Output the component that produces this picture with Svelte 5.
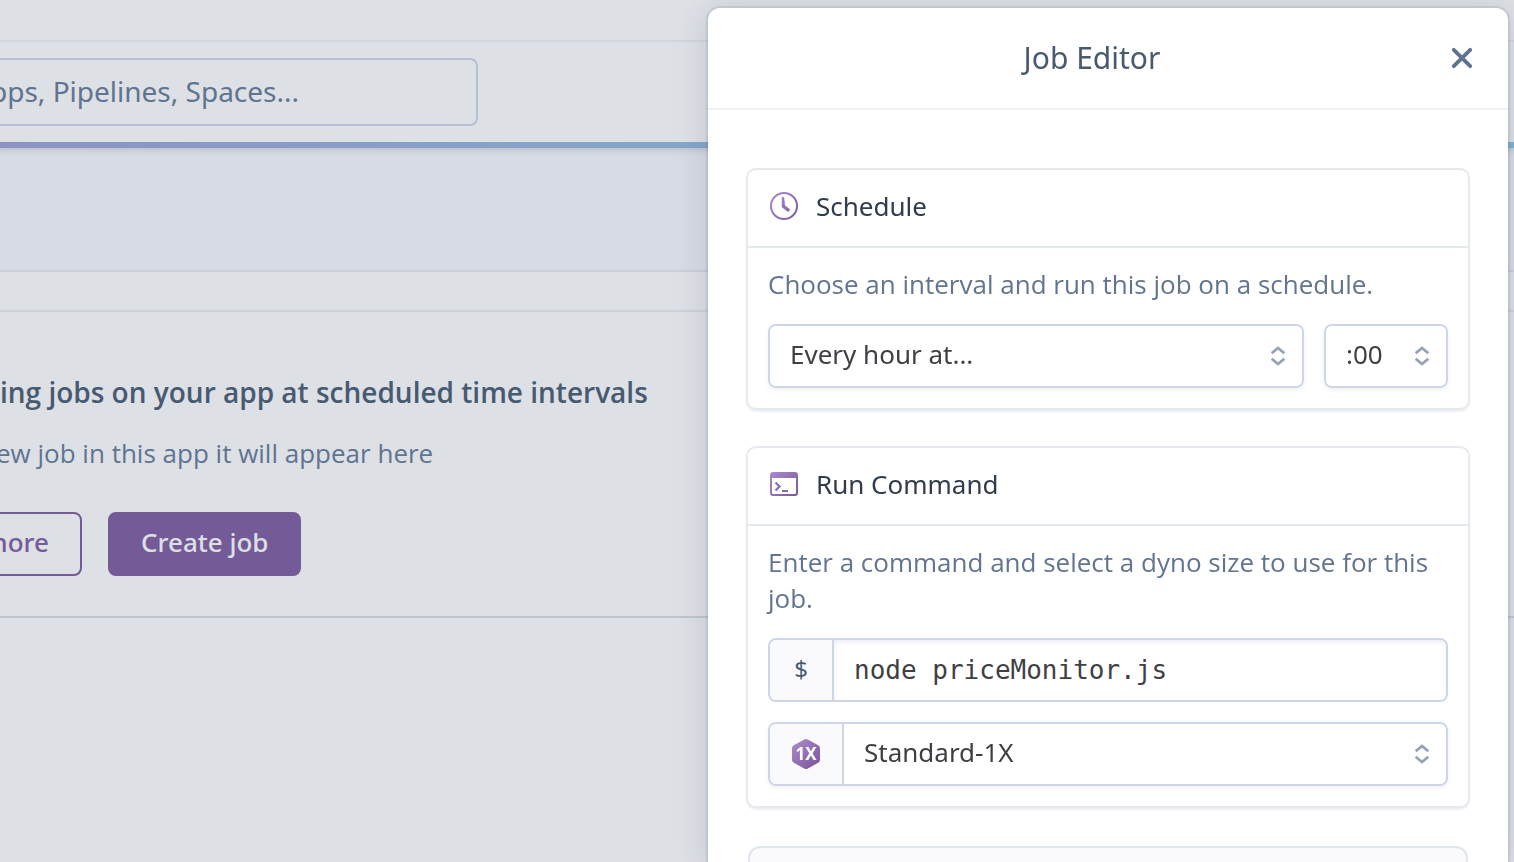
<script>
  let interval = $state('Every hour at...');
  let minute = $state(':00');
  let command = $state('node priceMonitor.js');
  let dyno = $state('Standard-1X');
</script>

{#snippet chevrons()}
  <svg class="chevrons" width="14" height="20" viewBox="0 0 14 20" fill="none" stroke="#96a3b6" stroke-width="2.8" aria-hidden="true">
    <path d="M.7 7.300 7 2l6.300 5.300M.7 12.700 7 18l6.300-5.300" />
  </svg>
{/snippet}

<div class="page">
  <header class="top">
    <div class="strip"></div>
    <div class="searchbar">
      <input class="search" type="text" aria-label="Search" placeholder="pps, Pipelines, Spaces..." />
    </div>
  </header>
  <div class="rule"></div>
  <div class="subhead"></div>
  <main class="jobs">
    <h1>ing jobs on your app at scheduled time intervals</h1>
    <p>ew job in this app it will appear here</p>
    <div class="actions">
      <a class="btn outline" href="#more">more</a>
      <button class="btn solid" type="button">Create job</button>
    </div>
  </main>
</div>

<div class="panel" role="dialog" aria-labelledby="title">
  <header class="panel-head">
    <h2 id="title">Job Editor</h2>
    <button class="close" type="button" aria-label="Close">
      <svg width="22" height="22" viewBox="0 0 22 22" fill="none" stroke="#5f7292" stroke-width="3.8" stroke-linecap="round" aria-hidden="true">
        <path d="M2.800 2.800l16.400 16.400M19.200 2.800l-16.400 16.400" />
      </svg>
    </button>
  </header>
  <div class="panel-body">
    <section class="card">
      <h3>
        <svg width="28" height="28" viewBox="0 0 28 28" fill="none" aria-hidden="true">
          <defs>
            <linearGradient id="purple" x1="0" y1="0" x2="28" y2="28" gradientUnits="userSpaceOnUse">
              <stop offset="0" stop-color="#ad8dcd" />
              <stop offset="1" stop-color="#79559a" />
            </linearGradient>
          </defs>
          <circle cx="14" cy="14" r="13" stroke="url(#purple)" stroke-width="2" />
          <path d="M12.2 5.2h1.6l.9 8.3 5.1 4.1-1.6 2.200-6.200-4.900z" fill="url(#purple)" stroke="url(#purple)" stroke-width=".6" stroke-linejoin="round" />
        </svg>
        Schedule
      </h3>
      <div class="card-body">
        <p>Choose an interval and run this job on a schedule.</p>
        <div class="row">
          <div class="select wide">
            <select aria-label="Interval" bind:value={interval}><option>Every hour at...</option></select>
            {@render chevrons()}
          </div>
          <div class="select small">
            <select aria-label="Minute" bind:value={minute}><option>:00</option></select>
            {@render chevrons()}
          </div>
        </div>
      </div>
    </section>

    <section class="card">
      <h3>
        <svg width="28" height="28" viewBox="0 0 28 28" fill="none" aria-hidden="true">
          <path fill-rule="evenodd" fill="url(#purple)" d="M3 2h22a3 3 0 0 1 3 3v18a3 3 0 0 1-3 3H3a3 3 0 0 1-3-3V5a3 3 0 0 1 3-3zM2 8v14.500c0 1 .5 1.500 1.500 1.500h21c1 0 1.500-.5 1.500-1.500V8z" />
          <path d="M5.500 12.500l4 4-4 4" stroke="#9370b8" stroke-width="2.400" />
          <path d="M12 21h6" stroke="#8c68ae" stroke-width="2" />
        </svg>
        Run Command
      </h3>
      <div class="card-body">
        <p>Enter a command and select a dyno size to use for this job.</p>
        <div class="group">
          <label class="addon" for="command">$</label>
          <input id="command" class="command" type="text" spellcheck="false" bind:value={command} />
        </div>
        <div class="group lifted">
          <label class="addon dyno" for="dyno">
            <svg width="28" height="30" viewBox="0 0 28 30" aria-label="Dyno size">
              <path fill="url(#purple)" d="M12.200.5q1.800-1 3.600 0l10.400 5.700Q28 7.200 28 9v12q0 1.800-1.800 2.800l-10.400 5.700q-1.800 1-3.600 0L1.800 23.800Q0 22.800 0 21V9q0-1.800 1.800-2.800z" />
              <text x="14" y="21" text-anchor="middle" fill="#fff">1X</text>
            </svg>
          </label>
          <div class="select bare">
            <select id="dyno" bind:value={dyno}><option>Standard-1X</option></select>
            {@render chevrons()}
          </div>
        </div>
      </div>
    </section>

    <section class="footer-card"></section>
  </div>
</div>

<style>
  :global(body) {
    overflow: hidden;
    background: #dde0e5;
    font-family: 'Noto Sans', 'Open Sans', sans-serif;
  }
  * {
    box-sizing: border-box;
  }
  h1, h2, h3, p {
    margin: 0;
    font-weight: 400;
  }
  input, select, button {
    font-family: inherit;
    font-size: 26px;
    margin: 0;
  }

  .strip {
    height: 42px;
    border-bottom: 2px solid #cfd5dd;
  }
  .searchbar {
    padding: 16px 0;
  }
  .search {
    display: block;
    width: 500px;
    height: 68px;
    margin-left: -22px;
    padding: 0 10px 2px;
    border: 2px solid #b5c0d3;
    border-radius: 8px;
    background: transparent;
    font-size: 28px;
    color: #5f7490;
  }
  .search::placeholder {
    color: #5f7490;
    opacity: 1;
  }
  .rule {
    position: relative;
    height: 6px;
    background: linear-gradient(90deg, #8c93c4, #87a3c8 36%, #7cb3cf);
    box-shadow: 0 0 6px 2px rgba(60, 70, 90, 0.2);
    clip-path: inset(0 0 -12px);
  }
  .subhead {
    height: 124px;
    background: #d7dbe4;
    border-bottom: 2px solid #c9cfdb;
  }
  .jobs {
    margin-top: 38px;
    padding: 60px 0 40px;
    border-top: 2px solid #cdd3d8;
    border-bottom: 2px solid #bfc6cd;
    box-shadow: 0 2px 4px rgba(60, 70, 90, 0.08);
  }
  .jobs h1 {
    font-family: 'Open Sans', 'Noto Sans', sans-serif;
    font-size: 28px;
    line-height: 40px;
    font-weight: 600;
    color: #475a70;
    white-space: nowrap;
  }
  .jobs p {
    margin: 22px 0 40px -4px;
    font-family: 'Open Sans', 'Noto Sans', sans-serif;
    font-size: 26px;
    line-height: 38px;
    color: #5f7490;
  }
  .actions {
    display: flex;
    gap: 26px;
    margin-left: -48px;
  }
  .btn {
    display: flex;
    align-items: center;
    justify-content: flex-end;
    height: 64px;
    padding: 0 31px 4px;
    border: 2px solid #745a96;
    border-radius: 8px;
    font-size: 26px;
    font-weight: 500;
    text-decoration: none;
  }
  .outline {
    width: 130px;
    color: #745a96;
  }
  .solid {
    background: #745a96;
    color: #dde0e5;
  }

  .panel {
    position: fixed;
    top: 8px;
    right: 6px;
    bottom: 0;
    width: min(800px, calc(100% - 12px));
    overflow: hidden;
    border-radius: 12px 12px 0 0;
    background: #fff;
    box-shadow: 0 0 0 2px rgba(70, 85, 120, 0.12), 0 4px 32px rgba(70, 85, 110, 0.2);
  }
  .panel-head {
    display: flex;
    align-items: center;
    height: 102px;
    padding: 0 30px;
    border-bottom: 2px solid #edf1f6;
  }
  .panel-head h2 {
    flex: 1;
    text-align: center;
    font-size: 30px;
    line-height: 40px;
    color: #475a70;
  }
  .close {
    display: flex;
    padding: 5px;
    border: 0;
    background: none;
  }
  .panel-body {
    display: flex;
    flex-direction: column;
    gap: 40px;
    padding: 60px 40px 0;
  }
  .card {
    border-radius: 8px;
    box-shadow: 0 0 0 2px #e6eaee, 0 2px 3px 1px rgba(60, 80, 100, 0.16);
    background: #fff;
  }
  .card h3 {
    display: flex;
    align-items: center;
    gap: 18px;
    height: 78px;
    padding: 0 22px 4px;
    border-bottom: 2px solid #e3e8ee;
    font-size: 26px;
    color: #303c4d;
  }
  .card-body {
    display: flex;
    flex-direction: column;
    gap: 20px;
    padding: 18px 20px 20px;
  }
  .card-body p {
    padding-bottom: 2px;
    font-family: 'Open Sans', 'Noto Sans', sans-serif;
    font-size: 26px;
    line-height: 36px;
    color: #62748f;
  }
  .row {
    display: flex;
    gap: 20px;
  }
  .select {
    position: relative;
    height: 64px;
    border: 2px solid #ccd6e6;
    border-radius: 8px;
    box-shadow: 0 2px 4px rgba(60, 80, 120, 0.08);
  }
  .wide {
    flex: 1;
  }
  .small {
    width: 124px;
  }
  .select select {
    appearance: none;
    width: 100%;
    height: 100%;
    padding: 0 36px 4px 20px;
    border: 0;
    border-radius: 6px;
    background: #fff;
    color: #3f3f44;
  }
  .chevrons {
    position: absolute;
    top: 0;
    bottom: 0;
    right: 17px;
    margin: auto 0;
    pointer-events: none;
  }
  .group {
    display: flex;
    height: 64px;
    overflow: hidden;
    border: 2px solid #ccd6e6;
    border-radius: 8px;
  }
  .lifted {
    box-shadow: 0 2px 4px rgba(60, 80, 120, 0.08);
  }
  .addon {
    display: flex;
    align-items: center;
    justify-content: center;
    width: 64px;
    padding-bottom: 4px;
    border-right: 2px solid #ccd6e6;
    background: #fafafd;
    font-size: 24px;
    color: #475a70;
  }
  .dyno {
    width: 74px;
    padding-bottom: 0;
  }
  .dyno text {
    font-size: 17px;
    font-weight: 700;
  }
  .command {
    flex: 1;
    min-width: 0;
    padding: 0 20px;
    border: 0;
    background: #fff;
    box-shadow: inset 0 2px 4px rgba(90, 110, 170, 0.12);
    font-family: 'DejaVu Sans Mono', monospace;
    font-size: 26px;
    color: #3f3f44;
  }
  .bare {
    flex: 1;
    height: auto;
    border: 0;
    border-radius: 0;
    box-shadow: none;
  }
  .footer-card {
    height: 120px;
    border: 2px solid #e0e6ef;
    border-radius: 12px;
    background: #fafafd;
  }
</style>
